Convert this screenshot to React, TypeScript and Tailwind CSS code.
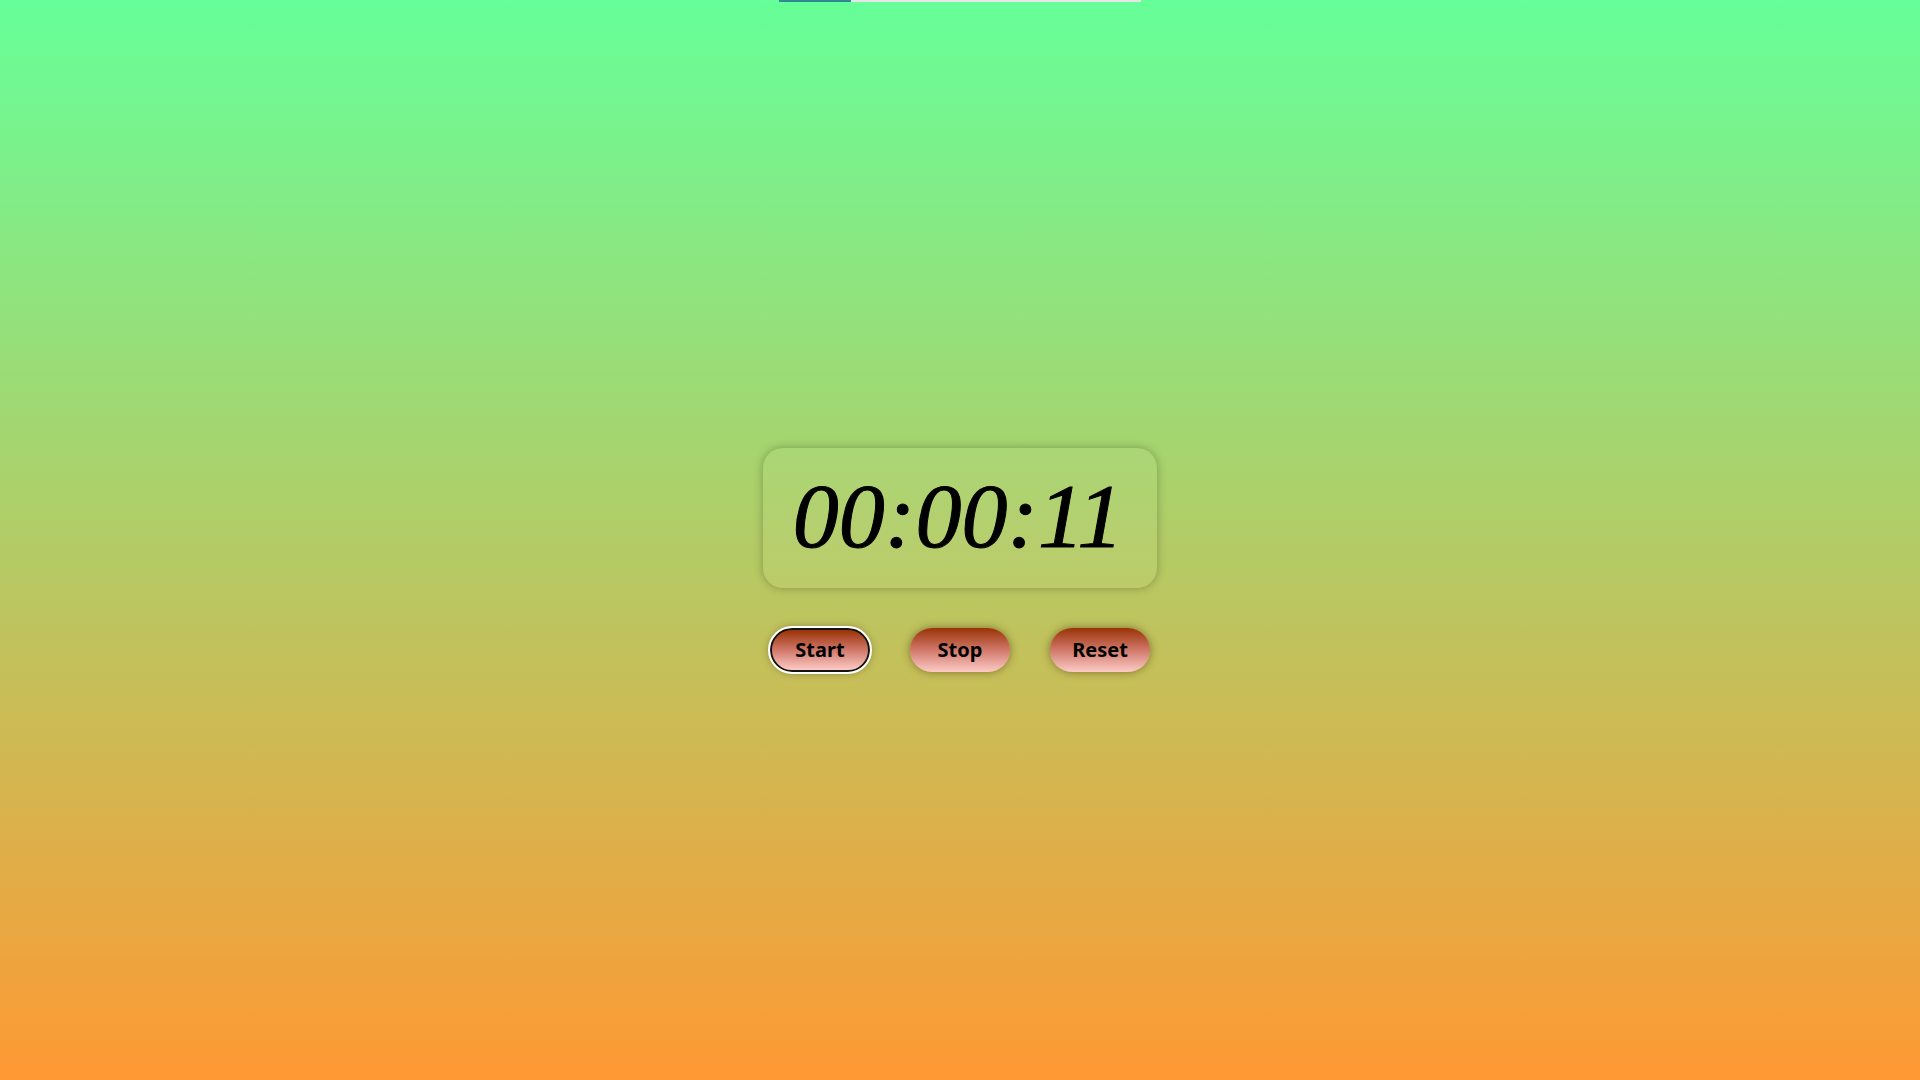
const buttons = ["Start", "Stop", "Reset"];

export default function App() {
  return (
    <div className="min-h-screen w-full bg-linear-to-b/srgb from-[#66ff99] to-[#ff9933] flex flex-col items-center">
      <div className="w-[362px] h-[2px] bg-[#e6e6e6] flex">
        <div className="w-[72px] h-full bg-[#2f8a96]" />
      </div>

      <div className="mt-[446px] w-[394px] h-[140px] rounded-[20px] bg-white/5 shadow-[0_0_10px_rgba(0,0,0,0.28)] flex items-center justify-center">
        <span className="font-['Liberation_Serif',serif] italic text-[92px] leading-none text-black pr-1 -mt-1 [-webkit-text-stroke:1px_black]">
          00:00:11
        </span>
      </div>

      <div className="mt-[40px] flex gap-[40px]">
        {buttons.map((label, i) => (
          <button
            key={label}
            className={
              "w-[100px] h-[44px] rounded-full bg-linear-to-b/srgb from-[#9a3206] via-[#d0786a] to-[#fdcbc6] shadow-[0_0_8px_rgba(60,30,0,0.5)] font-['Noto_Sans',sans-serif] font-bold text-[20px] text-black flex items-center justify-center " +
              (i === 0 ? "border-2 border-[#141414] outline-2 outline-white" : "")
            }
          >
            {label}
          </button>
        ))}
      </div>
    </div>
  );
}
